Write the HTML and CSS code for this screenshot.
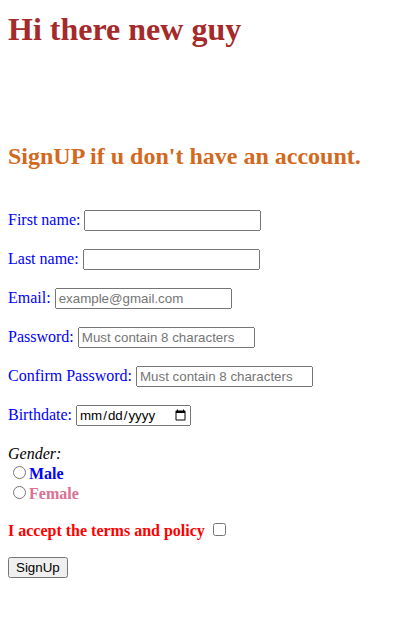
FILE: index.html
```html
<!DOCTYPE html>
<html lang="en">
<head>
<meta charset="utf-8">
<title>Sign up</title>
<link rel="stylesheet" href="styles.css">
</head>
<body>
<h1 class="title">Hi there new guy</h1>
<h2 class="subtitle">SignUP if u don't have an account.</h2>
<form class="signup">
  <p class="row"><label class="lbl" for="fn">First name:</label> <input class="field" type="text" id="fn"></p>
  <p class="row"><label class="lbl" for="ln">Last name:</label> <input class="field" type="text" id="ln"></p>
  <p class="row"><label class="lbl" for="em">Email:</label> <input class="field" type="email" id="em" placeholder="example@gmail.com"></p>
  <p class="row"><label class="lbl" for="pw">Password:</label> <input class="field" type="password" id="pw" placeholder="Must contain 8 characters"></p>
  <p class="row"><label class="lbl" for="cpw">Confirm Password:</label> <input class="field" type="password" id="cpw" placeholder="Must contain 8 characters"></p>
  <p class="row"><label class="lbl" for="bd">Birthdate:</label> <input class="date" type="date" id="bd"></p>
  <p class="row gender"><i class="gender-title">Gender:</i><br>
    <input class="radio" type="radio" name="gender" id="male"><label class="male" for="male">Male</label><br>
    <input class="radio" type="radio" name="gender" id="female"><label class="female" for="female">Female</label></p>
  <p class="row row-terms"><label class="terms" for="tc">I accept the terms and policy</label> <input class="check" type="checkbox" id="tc"></p>
  <p class="row row-submit"><button class="submit" type="submit">SignUp</button></p>
</form>
</body>
</html>
```
FILE: styles.css
```css
body {
  margin: 0 8px 8px;
  font-family: "Liberation Serif", "Times New Roman", serif;
  font-size: 16px;
  background: #fff;
}
.title {
  font-size: 32px;
  color: #a52a2a;
  margin: 11px 0 0;
}
.subtitle {
  font-size: 24px;
  color: #d2691e;
  margin: 95px 0 40px;
}
.row {
  margin: 18px 0;
}
.gender {
  line-height: 20px;
  margin-bottom: 16px;
}
.row-terms {
  margin: 16px 0 17px;
}
.row-submit {
  margin-top: 16px;
}
.lbl {
  color: #0000ff;
}
.field, .date, .submit {
  font-family: "Liberation Sans", Arial, sans-serif;
  font-size: 13.333px;
}
.field {
  width: 177px;
  box-sizing: border-box;
}
.date {
  width: 115px;
  box-sizing: border-box;
}
.radio {
  margin: 2px 3px 0 5px;
}
.gender-title {
  color: #000;
}
.male {
  color: #0000ff;
  font-weight: bold;
}
.female {
  color: #db7093;
  font-weight: bold;
}
.terms {
  color: #ff0000;
  font-weight: bold;
}
```
